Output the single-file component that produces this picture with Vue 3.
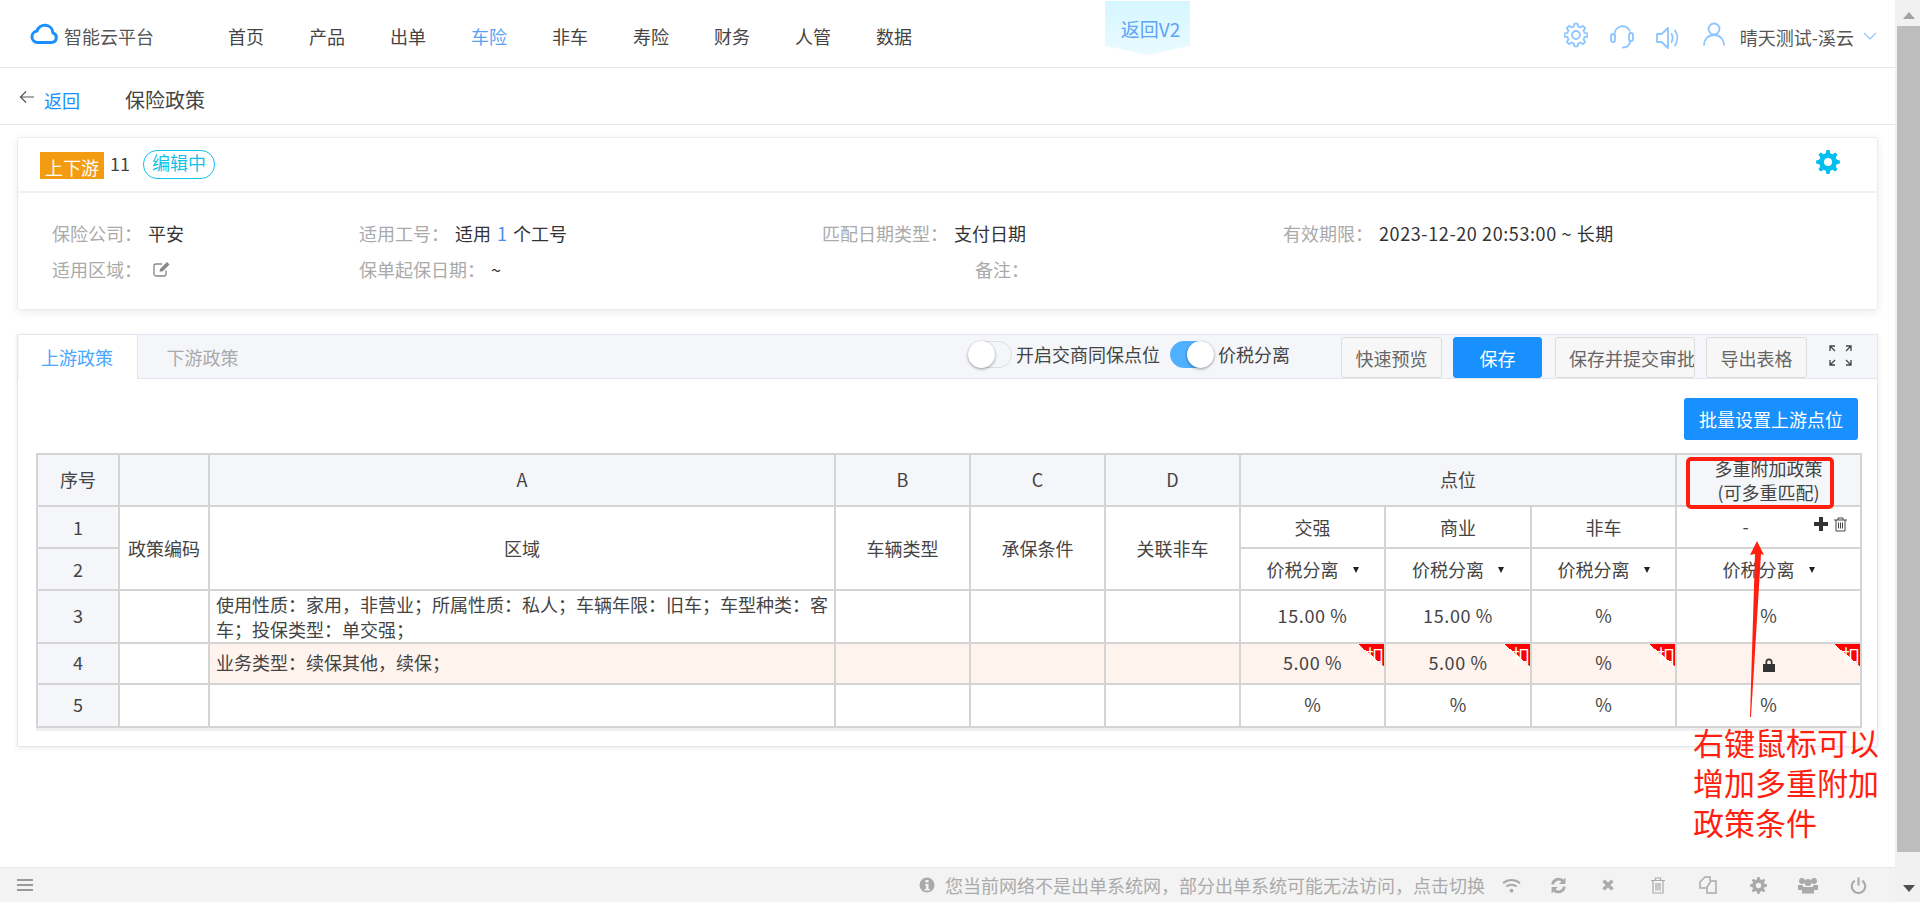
<template>
  <div class="app">
    <div class="main">
      <header class="top-nav">
        <div class="logo">
          <svg class="logo-cloud" viewBox="0 0 28 22" fill="none" stroke="#1890ff" stroke-width="3">
            <path d="M7 20.5H21.5A5 5 0 0 0 23 10.8A8.2 8.2 0 0 0 7 9A5.8 5.8 0 0 0 7 20.5Z" />
          </svg>
          <span>智能云平台</span>
        </div>
        <nav class="menu">
          <a v-for="item in menus" :key="item" :class="{ active: item === '车险' }">{{ item }}</a>
        </nav>
        <div class="back-v2">返回V2</div>
        <div class="user-box">
          <svg class="nav-icon gear" viewBox="0 0 24 24" fill="none" stroke="#8cc5ff" stroke-width="1.8">
            <path :d="gearPath(12, 11.5, 8.8, 8)" stroke-linejoin="round" />
            <circle cx="12" cy="12" r="4" />
          </svg>
          <svg class="nav-icon headset" viewBox="0 0 24 26" fill="none" stroke="#8cc5ff" stroke-width="1.8">
            <path d="M4.5 12V10a8 8 0 0 1 15.5-2.5" />
            <rect x="1" y="10" width="4" height="8" rx="2" />
            <rect x="19" y="9" width="4" height="8" rx="2" />
            <path d="M20 17c0 4-3 6.5-7 6.5" stroke-linecap="round" stroke-width="2" />
          </svg>
          <svg class="nav-icon speaker" viewBox="0 0 24 26" fill="none" stroke="#8cc5ff" stroke-width="1.8">
            <path d="M1 9h4.5L12 3v20l-6.5-6H1Z" stroke-linejoin="round" />
            <path d="M15.5 9c1.5 2.5 1.5 5.5 0 8M19 5.5c3 4.5 3 10.5 0 15" stroke-linecap="round" />
          </svg>
          <svg class="nav-icon user-icon" viewBox="0 0 22 24" fill="none" stroke="#8cc5ff" stroke-width="1.8">
            <circle cx="11" cy="7" r="5.5" />
            <path d="M1 23.5c0-6 4-10.5 10-10.5s10 4.5 10 10.5" />
          </svg>
          <span class="user-name">晴天测试-溪云</span>
          <svg class="chevron" viewBox="0 0 14 8" fill="none" stroke="#8cc5ff" stroke-width="1.2">
            <path d="M1 1l6 6 6-6" />
          </svg>
        </div>
      </header>

      <div class="crumb">
        <svg class="back-arrow" viewBox="0 0 16 14" fill="none" stroke="#555" stroke-width="1.2">
          <path d="M15 7H1.5M7 1.5 1.5 7 7 12.5" />
        </svg>
        <a class="back-link">返回</a>
        <span class="crumb-title">保险政策</span>
      </div>

      <div class="content">
        <section class="info-card">
          <div class="info-head">
            <span class="type-badge">上下游</span>
            <span class="policy-no">11</span>
            <span class="status-tag">编辑中</span>
            <svg class="card-gear" viewBox="0 0 24 24">
              <path :d="gearPath(12, 12, 9, 8)" fill="#00bfef" />
              <circle cx="12" cy="12" r="4" fill="#fff" />
            </svg>
          </div>
          <div class="info-body">
            <div class="field"><label>保险公司：</label><span>平安</span></div>
            <div class="field"><label>适用工号：</label><span>适用 <b class="link-num">1</b> 个工号</span></div>
            <div class="field"><label>匹配日期类型：</label><span>支付日期</span></div>
            <div class="field"><label>有效期限：</label><span class="date-range">2023-12-20 20:53:00 ~ 长期</span></div>
            <div class="field">
              <label>适用区域：</label>
              <svg class="edit-icon" viewBox="0 0 18 16" fill="none" stroke="#888" stroke-width="1.3">
                <path d="M13 9.5V13a2 2 0 0 1-2 2H3a2 2 0 0 1-2-2V5a2 2 0 0 1 2-2h6" />
                <path d="M6.5 10.5 7 8l7-7 2.5 2.5-7 7Z" fill="#888" stroke="none" />
              </svg>
            </div>
            <div class="field"><label>保单起保日期：</label><span>~</span></div>
            <div class="field remark"><label>备注：</label></div>
          </div>
        </section>

        <section class="policy-panel">
          <div class="tab-bar">
            <div class="tab active">上游政策</div>
            <div class="tab">下游政策</div>
            <div class="tools">
              <span class="switch"><i></i></span>
              <span class="switch-label">开启交商同保点位</span>
              <span class="switch on"><i></i></span>
              <span class="switch-label tax">价税分离</span>
              <button class="btn">快速预览</button>
              <button class="btn primary">保存</button>
              <button class="btn clip">保存并提交审批</button>
              <button class="btn">导出表格</button>
              <svg class="fullscreen" viewBox="0 0 23 21" fill="none" stroke="#444" stroke-width="1.3">
                <path d="M1 6V1h5M1 1l5 5M22 6V1h-5M22 1l-5 5M1 15v5h5M1 20l5-5M22 15v5h-5M22 20l-5-5" />
              </svg>
            </div>
          </div>
          <div class="panel-body">
            <div class="batch-row">
              <button class="btn-batch">批量设置上游点位</button>
            </div>
            <div class="table-wrap">
              <table class="policy-table">
                <colgroup>
                  <col v-for="(w, i) in colWidths" :key="i" :style="{ width: w + 'px' }" />
                </colgroup>
                <tr class="row-head">
                  <th>序号</th>
                  <th></th>
                  <th>A</th>
                  <th>B</th>
                  <th>C</th>
                  <th>D</th>
                  <th colspan="3">点位</th>
                  <th class="multi-head">多重附加政策<br />(可多重匹配)</th>
                </tr>
                <tr class="row-sub">
                  <th>1</th>
                  <td rowspan="2">政策编码</td>
                  <td rowspan="2">区域</td>
                  <td rowspan="2">车辆类型</td>
                  <td rowspan="2">承保条件</td>
                  <td rowspan="2">关联非车</td>
                  <td>交强</td>
                  <td>商业</td>
                  <td>非车</td>
                  <td class="multi-cell">
                    <span class="dash">-</span>
                    <span class="cell-tools">
                      <svg class="plus-icon" viewBox="0 0 14 14"><path d="M5 0h4v5h5v4H9v5H5V9H0V5h5Z" fill="#333" /></svg>
                      <svg class="trash-icon" viewBox="0 0 13 15" fill="none" stroke="#444" stroke-width="1">
                        <path d="M0 3h13M4 3V1h5v2M2 3v11h9V3M4.5 5.5v6M6.500 5.500v6M8.500 5.500v6" />
                      </svg>
                    </span>
                  </td>
                </tr>
                <tr class="row-sub">
                  <th>2</th>
                  <td v-for="n in 4" :key="n" class="select-cell">价税分离<span class="caret"></span></td>
                </tr>
                <tr class="row-data row-3">
                  <th>3</th>
                  <td></td>
                  <td class="area-text two-lines">使用性质：家用，非营业；所属性质：私人；车辆年限：旧车；车型种类：客车；投保类型：单交强；</td>
                  <td></td>
                  <td></td>
                  <td></td>
                  <td class="num">15.00 %</td>
                  <td class="num">15.00 %</td>
                  <td>%</td>
                  <td>%</td>
                </tr>
                <tr class="row-data row-4">
                  <th>4</th>
                  <td class="plain"></td>
                  <td class="area-text">业务类型：续保其他，续保；</td>
                  <td></td>
                  <td></td>
                  <td></td>
                  <td class="mark num">5.00 %<span class="corner">扣</span></td>
                  <td class="mark num">5.00 %<span class="corner">扣</span></td>
                  <td class="mark">%<span class="corner">扣</span></td>
                  <td class="mark">
                    <svg class="lock-icon" viewBox="0 0 12 14">
                      <path d="M2.5 6V4a3.5 3.5 0 0 1 7 0v2H12v8H0V6Zm1.700 0h3.600V4a1.800 1.800 0 0 0-3.600 0Z" fill="#333" />
                    </svg>
                    <span class="corner">扣</span>
                  </td>
                </tr>
                <tr class="row-data row-5">
                  <th>5</th>
                  <td></td>
                  <td></td>
                  <td></td>
                  <td></td>
                  <td></td>
                  <td>%</td>
                  <td>%</td>
                  <td>%</td>
                  <td>%</td>
                </tr>
              </table>
            </div>
          </div>
        </section>
      </div>

      <footer class="status-bar">
        <svg class="menu-lines" viewBox="0 0 16 12" fill="#999">
          <path d="M0 0h16v2H0ZM0 5h16v2H0ZM0 10h16v2H0Z" />
        </svg>
        <div class="status-right">
          <svg class="info-dot" viewBox="0 0 16 16">
            <circle cx="8" cy="8" r="7.5" fill="#aaa" />
            <path d="M6.5 3h3v2.500h-3ZM6 7h3.500v5H11v1.500H5.500V12H7V8.500H6Z" fill="#f3f3f3" />
          </svg>
          <span class="status-text">您当前网络不是出单系统网，部分出单系统可能无法访问，点击切换</span>
          <span class="bar-icon wifi">
            <svg viewBox="0 0 20 16" fill="none" stroke="#aaa" stroke-width="2.2">
              <path d="M1 5.500c5-4.500 13-4.500 18 0M4.500 9c3-2.500 8-2.500 11 0" />
              <circle cx="10" cy="13.5" r="2" fill="#aaa" stroke="none" />
            </svg>
          </span>
          <span class="bar-icon">
            <svg viewBox="0 0 16 16" fill="none" stroke="#aaa" stroke-width="2.6">
              <path d="M2.5 7a5.700 5.700 0 0 1 10-3M13.500 9a5.700 5.700 0 0 1-10 3" />
              <path d="M14.5 0.500v6h-6ZM1.500 15.500v-6h6Z" fill="#aaa" stroke="none" />
            </svg>
          </span>
          <span class="bar-icon small">
            <svg viewBox="0 0 16 16" fill="none" stroke="#aaa" stroke-width="4">
              <path d="M3 3l10 10M13 3 3 13" />
            </svg>
          </span>
          <span class="bar-icon tall">
            <svg viewBox="0 0 14 17" fill="none" stroke="#aaa" stroke-width="1.2">
              <path d="M0 3.500h14M4.500 3V1h5v2M2 3.500V16h10V3.500M5 6v7.500M7 6v7.500M9 6v7.500" />
            </svg>
          </span>
          <span class="bar-icon copy">
            <svg viewBox="0 0 18 18" fill="none" stroke="#aaa" stroke-width="1.5">
              <path d="M8 12H1V6l5-5h5v4" />
              <path d="M8 11l4-6h5v12H8Z" />
            </svg>
          </span>
          <span class="bar-icon">
            <svg viewBox="0 0 16 16">
              <path :d="gearPath(8, 8, 6, 8)" fill="#aaa" />
              <circle cx="8" cy="8" r="2.5" fill="#f3f3f3" />
            </svg>
          </span>
          <span class="bar-icon wide">
            <svg viewBox="0 0 20 16" fill="#aaa">
              <circle cx="4" cy="3.5" r="3" />
              <circle cx="16" cy="3.5" r="3" />
              <circle cx="10" cy="5" r="3.5" />
              <path d="M0 7.500h5v5H0ZM15 7.500h5v5h-5ZM4 9.500h12V16H4Z" />
            </svg>
          </span>
          <span class="bar-icon">
            <svg viewBox="0 0 16 16" fill="none" stroke="#aaa" stroke-width="2">
              <path d="M4.5 3.500a6.300 6.300 0 1 0 7 0M8 0.500V8" />
            </svg>
          </span>
        </div>
      </footer>
    </div>

    <div class="scrollbar">
      <div class="scroll-btn"><i class="arrow-up"></i></div>
      <div class="scroll-thumb"></div>
      <div class="scroll-btn end"><i class="arrow-down"></i></div>
    </div>

    <!-- 截图上的红色标注 -->
    <div class="note-box"></div>
    <svg class="note-arrow" viewBox="0 0 20 180">
      <polygon points="9,0 16,14 13,13 3,176 2,176 7,13 2,14" fill="#ff1f10" />
    </svg>
    <div class="note-text">右键鼠标可以<br />增加多重附加<br />政策条件</div>
  </div>
</template>

<script setup>
const menus = ["首页", "产品", "出单", "车险", "非车", "寿险", "财务", "人管", "数据"];
const colWidths = [82, 90, 626, 135, 135, 135, 145, 146, 145, 185];

// 齿轮外形，各处图标共用
function gearPath(c, outer, inner, teeth) {
  const step = (Math.PI * 2) / teeth;
  const pts = [];
  for (let i = 0; i < teeth; i++) {
    const a = i * step - Math.PI / 2;
    const list = [
      [inner, a - step * 0.32],
      [outer, a - step * 0.17],
      [outer, a + step * 0.17],
      [inner, a + step * 0.32],
    ];
    for (const [r, t] of list) {
      pts.push((c + r * Math.cos(t)).toFixed(2) + " " + (c + r * Math.sin(t)).toFixed(2));
    }
  }
  return "M" + pts.join("L") + "Z";
}
</script>

<style>
body {
  margin: 0;
  overflow: hidden;
  background: #fff;
}
</style>

<style scoped>
.app {
  position: relative;
  display: flex;
  width: 1920px;
  height: 902px;
  overflow: hidden;
  font-family: "Noto Sans CJK SC", "Liberation Sans", sans-serif;
  font-size: 18px;
  line-height: 24px;
  color: #333;
}

.main {
  width: 1895px;
  display: flex;
  flex-direction: column;
}

/* 顶部导航 */
.top-nav {
  position: relative;
  height: 68px;
  flex: none;
  box-sizing: border-box;
  padding-top: 5px;
  display: flex;
  align-items: center;
  border-bottom: 1px solid #e6e8ec;
}
.logo {
  display: flex;
  align-items: center;
  margin-left: 30px;
  color: #555;
}
.logo-cloud {
  width: 28px;
  height: 22px;
  margin-right: 6px;
  margin-top: -6px;
}
.menu {
  display: flex;
  gap: 45px;
  margin-left: 74px;
}
.menu a {
  color: #444;
}
.menu a.active {
  color: #5a9ff5;
}
.back-v2 {
  position: absolute;
  left: 1105px;
  top: 1px;
  width: 85px;
  height: 54px;
  padding: 16px 0 0 6px;
  box-sizing: border-box;
  font-size: 19px;
  text-align: center;
  white-space: nowrap;
  color: #5ea4f5;
  background: linear-gradient(#d6f6ff, #e9fbff);
  clip-path: polygon(0 0, 100% 0, 100% 83%, 50% 100%, 0 83%);
}
.user-box {
  margin-left: auto;
  margin-right: 18px;
  display: flex;
  align-items: center;
}
.nav-icon {
  width: 24px;
  height: 26px;
  margin-right: 22px;
}
.nav-icon.gear {
  margin-top: -3px;
}
.nav-icon.headset {
  margin-top: 2px;
}
.nav-icon.speaker {
  margin-top: 4px;
  margin-right: 23px;
}
.nav-icon.user-icon {
  width: 22px;
  margin-right: 15px;
  margin-top: -4px;
}
.user-name {
  color: #555;
  margin-top: 2px;
}
.chevron {
  width: 14px;
  height: 8px;
  margin-left: 9px;
}

/* 面包屑 */
.crumb {
  height: 57px;
  flex: none;
  box-sizing: border-box;
  padding-top: 7px;
  display: flex;
  align-items: center;
  border-bottom: 1px solid #e6e8ec;
}
.back-arrow {
  width: 16px;
  height: 14px;
  margin-left: 19px;
  margin-top: -6px;
}
.back-link {
  margin-left: 9px;
  color: #1890ff;
}
.crumb-title {
  margin-left: 45px;
  font-size: 20px;
  color: #444;
}

.content {
  padding: 12px 17px 0;
  flex: 1;
}

/* 基本信息卡片 */
.info-card {
  height: 173px;
  box-sizing: border-box;
  background: #fff;
  border: 1px solid #e9ecf2;
  border-radius: 3px;
  box-shadow: 0 2px 8px rgba(0, 0, 0, 0.08);
}
.info-head {
  height: 53px;
  display: flex;
  align-items: center;
  padding-left: 22px;
  border-bottom: 2px solid #eef0f5;
}
.type-badge {
  width: 64px;
  height: 27px;
  line-height: 30px;
  text-align: center;
  background: #f39c12;
  color: #fff;
  overflow: hidden;
  margin-top: 1px;
}
.policy-no {
  margin-left: 6px;
  margin-top: -3px;
  color: #444;
}
.status-tag {
  margin-left: 13px;
  width: 72px;
  height: 29px;
  box-sizing: border-box;
  border: 1px solid #12c2e9;
  border-radius: 14px;
  line-height: 23px;
  text-align: center;
  color: #12c2e9;
}
.card-gear {
  width: 24px;
  height: 24px;
  margin-left: auto;
  margin-right: 37px;
  margin-top: -6px;
}
.info-body {
  display: grid;
  grid-template-columns: 307px 463px 461px 1fr;
  grid-auto-rows: 36px;
  padding: 22px 0 0 34px;
}
.field {
  display: flex;
  align-items: center;
  white-space: nowrap;
}
.field label {
  color: #aaa;
  margin-right: 6px;
}
.remark {
  margin-left: 153px;
}
.link-num {
  font-weight: 400;
  color: #4a8ef0;
  margin: 0 2px;
}
.date-range {
  letter-spacing: 0.6px;
}
.edit-icon {
  width: 18px;
  height: 16px;
  margin-left: 5px;
}

/* 政策面板 */
.policy-panel {
  margin-top: 24px;
  height: 413px;
  box-sizing: border-box;
  background: #fff;
  border: 1px solid #e3e6ee;
  box-shadow: 0 1px 5px rgba(0, 0, 0, 0.08);
}
.tab-bar {
  height: 44px;
  box-sizing: border-box;
  display: flex;
  background: #f5f6fa;
  border-bottom: 1px solid #e3e6ee;
}
.tab {
  width: 119px;
  height: 44px;
  box-sizing: border-box;
  line-height: 45px;
  text-align: center;
  color: #aaa;
}
.tab.active {
  background: #fff;
  color: #4ba6ff;
  border-right: 1px solid #e3e6ee;
  margin-left: 1px;
  padding-right: 2px;
}
.tab + .tab {
  margin-left: 5px;
}
.tools {
  margin-left: auto;
  display: flex;
  align-items: flex-start;
  padding-right: 25px;
}
.switch {
  position: relative;
  width: 44px;
  height: 27px;
  margin-top: 6px;
  box-sizing: border-box;
  border: 1px solid #ddd;
  border-radius: 14px;
  background: #f5f6fa;
}
.switch i {
  position: absolute;
  left: -1px;
  top: -1px;
  width: 27px;
  height: 27px;
  border-radius: 50%;
  background: #fff;
  box-shadow: 0 1px 3px rgba(0, 0, 0, 0.4);
}
.switch.on {
  background: #4fb0ff;
  border-color: #4fb0ff;
  margin-left: 10px;
}
.switch.on i {
  left: 16px;
}
.switch-label {
  margin: 6px 0 0 4px;
  line-height: 27px;
  color: #444;
}
.switch-label.tax {
  margin-right: 51px;
}
.btn {
  height: 41px;
  margin-top: 2px;
  width: 101px;
  padding: 0;
  background: #f7f7f7;
  border: 1px solid #ddd;
  border-radius: 3px;
  font: inherit;
  color: #666;
  margin-right: 11px;
}
.btn.primary {
  width: 89px;
  background: #1890ff;
  border-color: #1890ff;
  color: #fff;
  margin-right: 13px;
}
.btn.clip {
  width: 140px;
  padding-left: 13px;
  text-align: left;
  white-space: nowrap;
  overflow: hidden;
}
.fullscreen {
  width: 23px;
  height: 21px;
  margin: 10px 0 0 11px;
}
.panel-body {
  padding: 19px 16px 0 18px;
}
.batch-row {
  display: flex;
  justify-content: flex-end;
  padding-right: 3px;
  margin-bottom: 13px;
}
.btn-batch {
  width: 174px;
  height: 42px;
  padding: 0;
  background: #1890ff;
  border: none;
  border-radius: 3px;
  font: inherit;
  color: #fff;
}

/* 表格 */
.table-wrap {
  padding-bottom: 3px;
  background: #f0f0f0;
}
.policy-table {
  width: 1824px;
  table-layout: fixed;
  border-collapse: collapse;
  background: #fff;
  color: #444;
}
.policy-table th,
.policy-table td {
  position: relative;
  padding: 0;
  border: 2px solid #d4d4d4;
  text-align: center;
  font-weight: 400;
}
.policy-table th {
  background: #f5f6fa;
}
.row-head {
  height: 52px;
}
.row-sub {
  height: 42px;
}
.row-3 {
  height: 53px;
}
.row-4 {
  height: 41px;
}
.row-5 {
  height: 43px;
}
.policy-table .row-head th,
.policy-table .row-data th,
.policy-table .row-data td {
  padding-bottom: 3px;
}
.row-4 td {
  background: #fff3ee;
}
.row-4 td.plain {
  background: #fff;
}
.policy-table td.area-text {
  padding: 0 6px 3px;
  text-align: left;
  line-height: 25px;
}
.policy-table td.two-lines {
  padding: 1px 6px 0;
  vertical-align: top;
}
.policy-table td.num {
  letter-spacing: 0.6px;
}
.policy-table .row-head th.multi-head {
  padding: 0;
}
.dash {
  margin-right: 46px;
  position: relative;
  top: -1px;
}
.cell-tools {
  position: absolute;
  right: 13px;
  top: 10px;
  display: flex;
  gap: 6px;
}
.plus-icon {
  width: 14px;
  height: 14px;
}
.trash-icon {
  width: 13px;
  height: 15px;
}
.select-cell {
  white-space: nowrap;
}
.caret {
  display: inline-block;
  margin-left: 14px;
  margin-bottom: 4px;
  border-left: 3.5px solid transparent;
  border-right: 3.5px solid transparent;
  border-top: 6px solid #222;
}
.corner {
  position: absolute;
  right: 0;
  top: 0;
  width: 26px;
  height: 22px;
  line-height: 22px;
  text-align: right;
  letter-spacing: 0;
  color: #fff;
  background: linear-gradient(to top right, transparent 50%, #f00 50%);
}
.lock-icon {
  width: 12px;
  height: 14px;
  vertical-align: -2px;
}

/* 底部状态栏 */
.status-bar {
  height: 35px;
  flex: none;
  box-sizing: border-box;
  display: flex;
  align-items: center;
  background: #f3f3f3;
  border-top: 1px solid #e8e8e8;
  color: #aaa;
}
.menu-lines {
  width: 16px;
  height: 12px;
  margin-left: 17px;
}
.status-right {
  margin-left: auto;
  margin-right: 12px;
  display: flex;
  align-items: center;
}
.info-dot {
  width: 16px;
  height: 16px;
  margin-right: 10px;
}
.status-text {
  margin-right: 4px;
}
.bar-icon {
  width: 50px;
  display: flex;
  justify-content: center;
}
.bar-icon.wifi {
  width: 44px;
}
.bar-icon svg {
  width: 17px;
  height: 17px;
}
.bar-icon.wifi svg {
  width: 19px;
  height: 15px;
}
.bar-icon.small svg {
  width: 14px;
  height: 14px;
}
.bar-icon.tall svg {
  width: 14px;
  height: 17px;
}
.bar-icon.copy svg {
  width: 18px;
  height: 20px;
}
.bar-icon.wide svg {
  width: 20px;
}

/* 假滚动条 */
.scrollbar {
  width: 25px;
  flex: none;
  display: flex;
  flex-direction: column;
  background: #f1f1f1;
}
.scroll-btn {
  height: 26px;
  flex: none;
  display: flex;
  justify-content: center;
  align-items: center;
  padding-left: 2px;
}
.scroll-btn.end {
  height: 50px;
  align-items: flex-end;
  padding-bottom: 10px;
  box-sizing: border-box;
}
.arrow-up {
  border-left: 6px solid transparent;
  border-right: 6px solid transparent;
  border-bottom: 7px solid #a3a3a3;
  margin-top: 4px;
}
.arrow-down {
  border-left: 6px solid transparent;
  border-right: 6px solid transparent;
  border-top: 7px solid #505050;
}
.scroll-thumb {
  flex: 1;
  margin-left: 2px;
  background: #bdbdbd;
}

/* 标注 */
.note-box {
  position: absolute;
  left: 1686px;
  top: 457px;
  width: 148px;
  height: 52px;
  box-sizing: border-box;
  border: 4px solid #ff1f10;
  border-radius: 5px;
}
.note-arrow {
  position: absolute;
  left: 1748px;
  top: 541px;
  width: 20px;
  height: 180px;
}
.note-text {
  position: absolute;
  left: 1693px;
  top: 722px;
  font-size: 31px;
  line-height: 40px;
  color: #ff1f10;
  white-space: nowrap;
}
</style>
